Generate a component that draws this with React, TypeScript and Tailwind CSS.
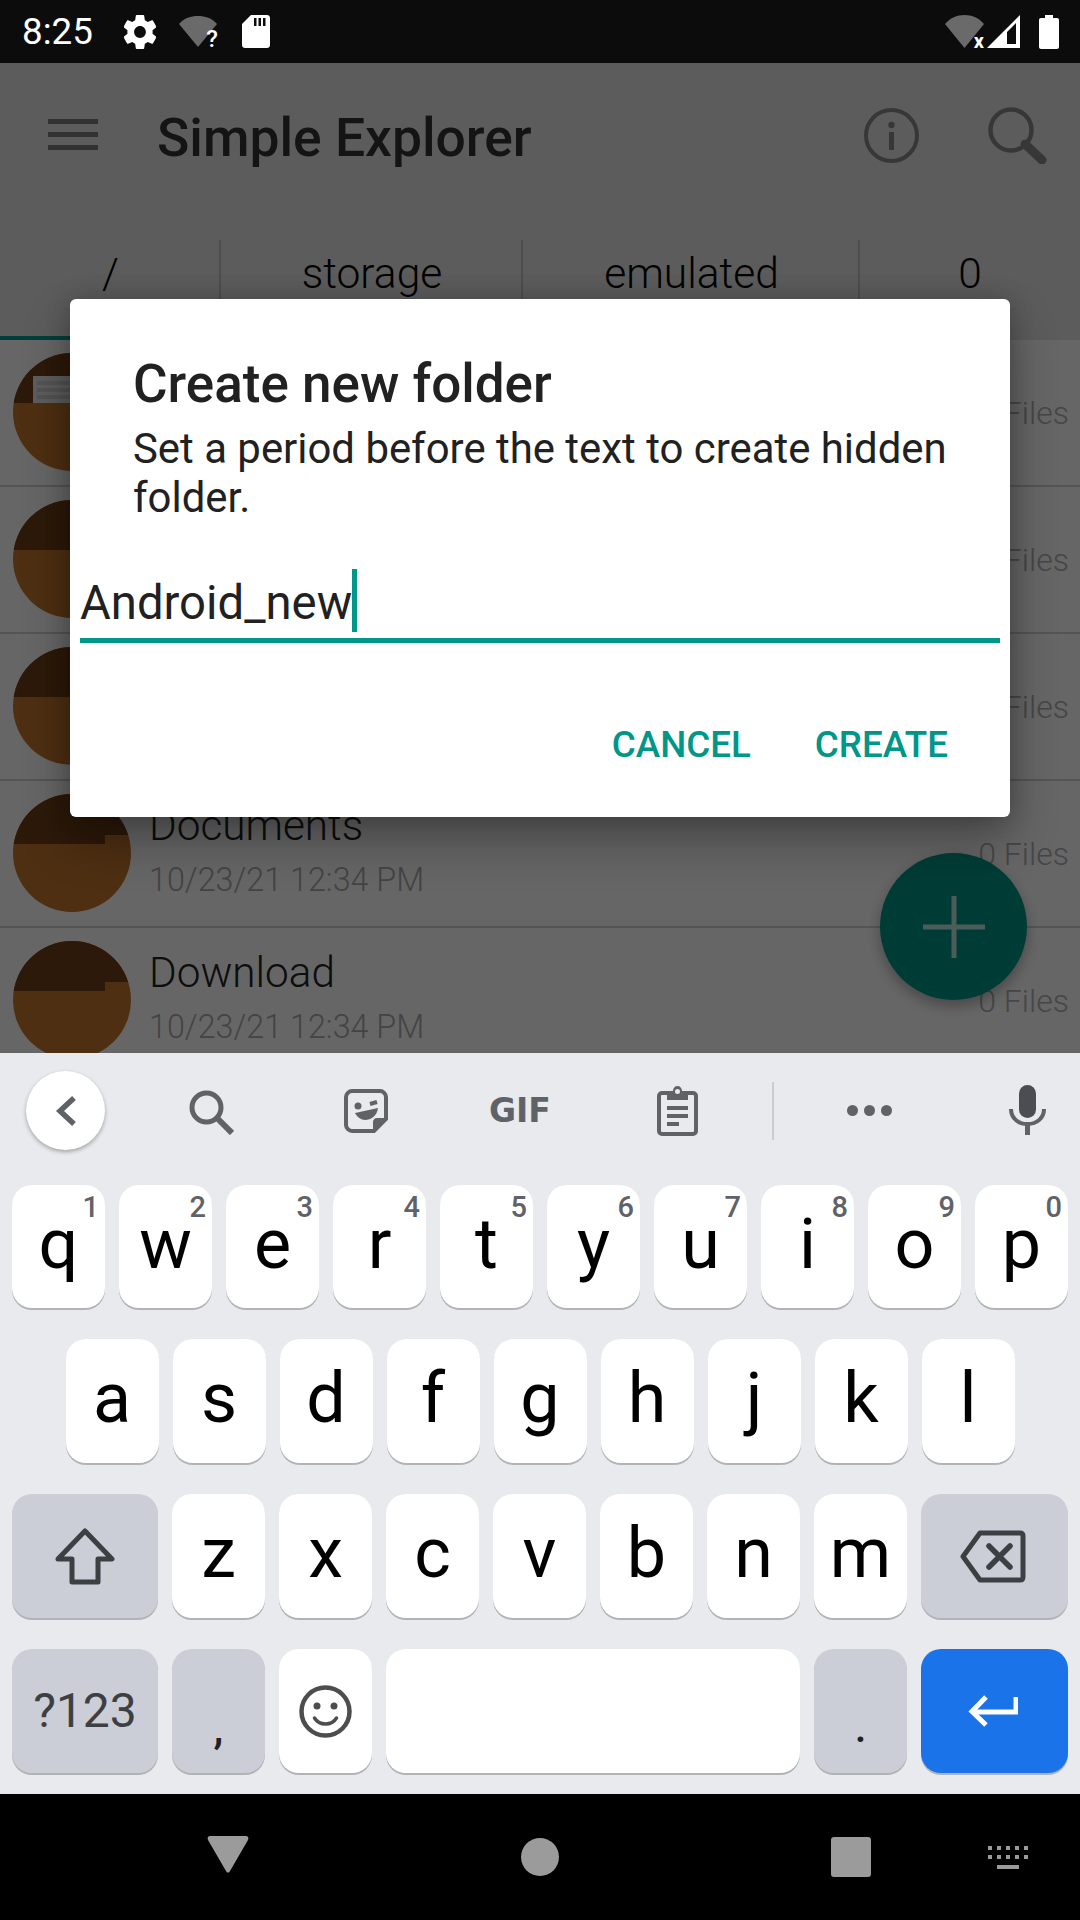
import React from "react";

const font = { fontFamily: "Roboto, sans-serif" };

function Key({ c, n, w = "w-[93px]" }: { c: string; n?: string; w?: string }) {
  return (
    <div className={`relative ${w} h-full rounded-[20px] bg-white shadow-[0_2px_0_#b1b3b7] text-black`}>
      <span className="absolute inset-x-0 top-[19px] h-[80px] text-center text-[70px] leading-[80px]">{c}</span>
      {n && <span className="absolute right-[6px] top-[6px] text-[29px] leading-[32px] font-medium text-[#5f6368]">{n}</span>}
    </div>
  );
}

function GrayKey({ w = "w-[93px]", children, className = "" }: { w?: string; children?: React.ReactNode; className?: string }) {
  return (
    <div className={`relative ${w} h-full rounded-[20px] bg-[#cbced6] shadow-[0_2px_0_#b1b3b7] flex items-center justify-center ${className}`}>
      {children}
    </div>
  );
}

function FolderCircle({ paper = false }: { paper?: boolean }) {
  return (
    <svg width="118" height="118" viewBox="0 0 118 118" className="shrink-0">
      <defs>
        <clipPath id={paper ? "cp1" : "cp2"}>
          <circle cx="59" cy="59" r="59" />
        </clipPath>
      </defs>
      <g clipPath={`url(#${paper ? "cp1" : "cp2"})`}>
        <rect width="118" height="118" fill="#c4762f" />
        <path d="M0 0H118V41H92V50H0Z" fill="#6e3f18" />
        {paper && (
          <>
            <rect x="20" y="23" width="80" height="27" fill="#e8e8e8" />
            <rect x="24" y="28" width="70" height="4" fill="#cfcfcf" />
            <rect x="24" y="35" width="70" height="4" fill="#cfcfcf" />
            <rect x="24" y="42" width="70" height="4" fill="#cfcfcf" />
          </>
        )}
      </g>
    </svg>
  );
}

function Row({ name, date, paper }: { name?: string; date?: string; paper?: boolean }) {
  return (
    <div className="relative h-[147px] shrink-0 border-b-[2px] border-[#d3d3d3] flex pl-[13px] pt-[13px] bg-white">
      <FolderCircle paper={paper} />
      <div className="ml-[18px] flex flex-col">
        {name && <span className="text-[42.3px] leading-[46px] font-light text-[#222] mt-[9px]">{name}</span>}
        {date && <span className="text-[32.3px] leading-[38px] font-light text-[#aaa] mt-[12px]">{date}</span>}
      </div>
      <span className="absolute right-[11px] top-[54px] text-[32px] leading-[38px] font-light text-[#b0b0b0]">0 Files</span>
    </div>
  );
}

function Tab({ w, t, sep = true, line = false }: { w: string; t: string; sep?: boolean; line?: boolean }) {
  return (
    <div className={`relative ${w} h-full flex items-start justify-center pt-[11px]`}>
      <span className="text-[42.5px] leading-[46px] font-light text-black">{t}</span>
      {sep && <span className="absolute right-0 top-0 bottom-0 w-[2px] bg-[#c4c4c4]" />}
      {line && <span className="absolute inset-x-0 bottom-0 h-[4px] bg-[#009f8e]" />}
    </div>
  );
}

const row1: [string, string][] = [["q","1"],["w","2"],["e","3"],["r","4"],["t","5"],["y","6"],["u","7"],["i","8"],["o","9"],["p","0"]];

export default function App() {
  return (
    <div className="relative w-[1080px] h-[1920px] overflow-hidden flex flex-col bg-black" style={font}>
      {/* status bar */}
      <div className="h-[63px] shrink-0 bg-[#0c0c0c] flex items-center pl-[22px] pr-[21px] text-white">
        <span className="text-[36.75px] leading-[40px] w-[70px] whitespace-nowrap">8:25</span>
        <svg className="ml-[32px]" width="32" height="34" viewBox="2.5 2 19 20" fill="#fff" preserveAspectRatio="none"><path d="M19.43 12.98c.04-.32.07-.64.07-.98s-.03-.66-.07-.98l2.11-1.65c.19-.15.24-.42.12-.64l-2-3.46c-.12-.22-.39-.3-.61-.22l-2.49 1c-.52-.4-1.08-.73-1.69-.98l-.38-2.65C14.46 2.18 14.25 2 14 2h-4c-.25 0-.46.18-.49.42l-.38 2.65c-.61.25-1.17.59-1.69.98l-2.49-1c-.23-.09-.49 0-.61.22l-2 3.46c-.13.22-.07.49.12.64l2.11 1.65c-.04.32-.07.65-.07.98s.03.66.07.98l-2.11 1.65c-.19.15-.24.42-.12.64l2 3.46c.12.22.39.3.61.22l2.49-1c.52.4 1.08.73 1.69.98l.38 2.65c.03.24.24.42.49.42h4c.25 0 .46-.18.49-.42l.38-2.65c.61-.25 1.17-.59 1.69-.98l2.49 1c.23.09.49 0 .61-.22l2-3.46c.12-.22.07-.49-.12-.64l-2.11-1.65zM12 15.5c-1.93 0-3.5-1.57-3.5-3.5s1.57-3.5 3.5-3.5 3.5 1.57 3.5 3.5-1.57 3.5-3.5 3.5z"/></svg>
        <div className="relative ml-[23px] w-[38px] h-[31px]">
          <svg width="38" height="31" viewBox="0 0 38 31"><path d="M0 8C5 2 12 0 19 0s14 2 19 8L19 31Z" fill="#6a6a6a" /></svg>
          <span className="absolute right-[-1px] bottom-[-4px] text-[24px] leading-[24px] font-medium">?</span>
        </div>
        <svg className="ml-[25px]" width="28" height="33" viewBox="0 0 28 33"><path d="M9 0H25C26.7 0 28 1.3 28 3V30C28 31.7 26.7 33 25 33H3C1.3 33 0 31.700 0 30V9Z" fill="#fff" /><rect x="12" y="3" width="2.500" height="8" fill="#0c0c0c" /><rect x="16.500" y="3" width="2.500" height="8" fill="#0c0c0c" /><rect x="21" y="3" width="2.500" height="8" fill="#0c0c0c" /></svg>
        <div className="ml-auto relative w-[39px] h-[33px]">
          <svg width="39" height="33" viewBox="0 0 39 33"><path d="M0 9C5 3 12 0 19.500 0S34 3 39 9L19.500 33Z" fill="#6a6a6a" /></svg>
          <span className="absolute right-[0px] bottom-[-3px] text-[20px] leading-[20px] font-bold">x</span>
        </div>
        <svg className="ml-[3px]" width="33" height="33" viewBox="0 0 33 33"><path d="M33 0V33H0ZM29 8 20 17V29H29Z" fill="#fff" fillRule="evenodd" /></svg>
        <svg className="ml-[19px]" width="20" height="34" viewBox="0 0 20 34"><path d="M6 0H14V3H18C19.100 3 20 3.900 20 5V32C20 33.100 19.100 34 18 34H2C.9 34 0 33.100 0 32V5C0 3.900.9 3 2 3H6Z" fill="#fff" /></svg>
      </div>

      {/* app under the scrim */}
      <div className="relative flex-1 min-h-0 flex flex-col">
        <div className="relative h-[990px] shrink-0 overflow-hidden bg-white flex flex-col">
          <div className="h-[177px] shrink-0 bg-[#e6e6e6] flex items-start relative">
            <div className="ml-[48px] mt-[56px] w-[50px] flex flex-col gap-[8px]">
              <span className="h-[5px] bg-[#7d7d7d]" />
              <span className="h-[5px] bg-[#7d7d7d]" />
              <span className="h-[5px] bg-[#7d7d7d]" />
            </div>
            <span className="ml-[59px] mt-[45px] text-[53.4px] leading-[60px] font-medium text-[#333] whitespace-nowrap">Simple Explorer</span>
            <svg className="ml-auto mt-[45px]" width="55" height="55" viewBox="0 0 55 55" fill="none"><circle cx="27.500" cy="27.500" r="25.500" stroke="#8a8a8a" strokeWidth="4" /><rect x="25" y="24" width="5" height="18" fill="#8a8a8a" /><circle cx="27.500" cy="17" r="3.200" fill="#8a8a8a" /></svg>
            <svg className="ml-[69px] mr-[33px] mt-[44px]" width="59" height="57" viewBox="0 0 59 57" fill="none"><circle cx="23" cy="23" r="20.500" stroke="#8a8a8a" strokeWidth="4.500" /><path d="M37 37 54 53" stroke="#8a8a8a" strokeWidth="9" strokeLinecap="round" /></svg>
          </div>
          <div className="h-[100px] shrink-0 bg-[#e6e6e6] flex">
            <Tab w="w-[221px]" t="/" line />
            <Tab w="w-[302px]" t="storage" />
            <Tab w="w-[337px]" t="emulated" />
            <Tab w="w-[220px]" t="0" sep={false} />
          </div>
          <Row paper />
          <Row />
          <Row />
          <Row name="Documents" date="10/23/21 12:34 PM" />
          <Row name="Download" date="10/23/21 12:34 PM" />
          {/* fab */}
          <div className="absolute left-[880px] top-[790px] w-[147px] h-[147px] rounded-full bg-[#009688] shadow-[0_6px_14px_rgba(0,0,0,0.3)] flex items-center justify-center">
            <svg width="62" height="62" viewBox="0 0 62 62"><path d="M28.500 0H33.500V28.500H62V33.500H33.500V62H28.500V33.500H0V28.500H28.500Z" fill="#fff" fillOpacity="0.75" /></svg>
          </div>
          <div className="absolute inset-0 bg-black/60" />
        </div>

        {/* dialog */}
        <div className="absolute left-[70px] top-[236px] w-[940px] h-[518px] rounded-[6px] bg-white shadow-[0_24px_48px_rgba(0,0,0,0.3),0_0_24px_rgba(0,0,0,0.2)] flex flex-col">
          <span className="ml-[63px] mt-[55px] text-[53px] leading-[60px] font-medium text-[#212121] whitespace-nowrap">Create new folder</span>
          <p className="ml-[63px] mt-[10px] w-[840px] text-[41.9px] leading-[49px] text-[#212121]">Set a period before the text to create hidden folder.</p>
          <div className="relative mx-[10px] mt-[43px] w-[920px] h-[78px] border-b-[5px] border-[#009688] text-[47.25px] leading-[60px] text-[#212121]">
            <div className="flex items-start pt-[8px]">
              <span>Android_new</span>
              <span className="w-[5px] h-[63px] -mt-[4px] bg-[#009688]" />
            </div>
          </div>
          <div className="ml-auto mr-[62px] mt-[80px] flex gap-[64px] text-[36.75px] leading-[44px] font-medium text-[#009688]">
            <span>CANCEL</span>
            <span>CREATE</span>
          </div>
        </div>

        {/* keyboard */}
        <div className="h-[741px] shrink-0 bg-[#e8eaed] flex flex-col px-[12px]">
          <div className="relative h-[132px] shrink-0 flex items-start -mx-[12px]">
            <div className="ml-[26px] mt-[18px] w-[79px] h-[79px] rounded-full bg-white shadow-[0_2px_4px_rgba(0,0,0,0.3)] flex items-center justify-center">
              <svg width="22" height="32" viewBox="0 0 22 32" fill="none"><path d="M19 3 5 16 19 29" stroke="#5f6368" strokeWidth="5.500" /></svg>
            </div>
            <svg className="ml-[84px] mt-[37px]" width="45" height="45" viewBox="0 0 45 45" fill="none"><circle cx="17.500" cy="17.500" r="14.500" stroke="#5f6368" strokeWidth="5" /><path d="M27 27 43 43" stroke="#5f6368" strokeWidth="6" /></svg>
            <svg className="ml-[110px] mt-[36px]" width="44" height="44" viewBox="0 0 44 44" fill="none"><path d="M8 2H36C39 2 42 5 42 8V30L30 42H8C5 42 2 39 2 36V8C2 5 5 2 8 2Z" stroke="#5f6368" strokeWidth="4" /><path d="M42 29H33C30.500 29 29 31 29 33V42Z" fill="#5f6368" /><circle cx="14" cy="17" r="3.500" fill="#5f6368" /><path d="M26 15 33 13" stroke="#5f6368" strokeWidth="4" /><path d="M11 24 34 19C33 27 27 31 21 31 17 31 13 28 11 24Z" fill="#5f6368" /></svg>
            <span className="ml-[101px] mt-[38px] w-[61px] text-center text-[33px] leading-[40px] font-black text-[#5f6368]" style={{ fontFamily: "'DejaVu Sans', sans-serif" }}>GIF</span>
            <svg className="ml-[107px] mt-[33px]" width="41" height="50" viewBox="0 0 41 50" fill="none"><rect x="2" y="7" width="37" height="41" rx="3" stroke="#5f6368" strokeWidth="4" /><path d="M10 5H16C16 2 18 0 20.500 0S25 2 25 5H31V14H10Z" fill="#5f6368" /><circle cx="20.500" cy="5.500" r="2.500" fill="#e8eaed" /><rect x="10" y="20" width="21" height="4" fill="#5f6368" /><rect x="10" y="28" width="21" height="4" fill="#5f6368" /><rect x="10" y="36" width="12" height="4" fill="#5f6368" /></svg>
            <span className="ml-[74px] mt-[29px] w-[2px] h-[58px] bg-[#c9ccd2]" />
            <div className="ml-[73px] mt-[52px] flex gap-[6px]">
              <span className="w-[11px] h-[11px] rounded-full bg-[#5f6368]" />
              <span className="w-[11px] h-[11px] rounded-full bg-[#5f6368]" />
              <span className="w-[11px] h-[11px] rounded-full bg-[#5f6368]" />
            </div>
            <svg className="ml-[117px] mt-[32px]" width="37" height="50" viewBox="0 0 37 50" fill="none"><rect x="10" y="0" width="17" height="33" rx="8.500" fill="#4a4d52" /><path d="M2 24C2 33 9 39 18.500 39S35 33 35 24" stroke="#5f6368" strokeWidth="4" /><rect x="16" y="38" width="5" height="12" fill="#5f6368" /></svg>
          </div>

          <div className="flex flex-col gap-[31px] pb-[21px] flex-1 min-h-0">
            <div className="h-[123px] flex gap-[14px]">
              {row1.map(([c, n]) => <Key key={c} c={c} n={n} />)}
            </div>
            <div className="h-[124px] flex gap-[14px] pl-[53.500px]">
              {"asdfghjkl".split("").map((c) => <Key key={c} c={c} />)}
            </div>
            <div className="h-[124px] flex gap-[14px]">
              <GrayKey w="w-[146px]">
                <svg width="60" height="57" viewBox="0 0 60 57" fill="none"><path d="M30 3 57 31H43V54H17V31H3Z" stroke="#3c4043" strokeWidth="5" strokeLinejoin="round" /></svg>
              </GrayKey>
              {"zxcvbnm".split("").map((c) => <Key key={c} c={c} />)}
              <GrayKey w="w-[147px]" className="pr-[4px]">
                <svg width="66" height="53" viewBox="0 0 66 53" fill="none"><path d="M20 3H60C62 3 63 4 63 6V47C63 49 62 50 60 50H20L3 26.500Z" stroke="#3c4043" strokeWidth="5" strokeLinejoin="round" /><path d="M29 16 50 37M50 16 29 37" stroke="#3c4043" strokeWidth="5.500" strokeLinecap="round" /></svg>
              </GrayKey>
            </div>
            <div className="h-[124px] flex gap-[14px]">
              <GrayKey w="w-[146px]"><span className="text-[48px] leading-[56px] text-[#3c4043]">?123</span></GrayKey>
              <GrayKey><span className="absolute inset-x-0 top-[55px] text-center text-[44px] leading-[48px] font-medium text-[#202124]">,</span></GrayKey>
              <div className="w-[93px] h-full rounded-[20px] bg-white shadow-[0_2px_0_#b1b3b7] flex items-center justify-center">
                <svg width="53" height="53" viewBox="0 0 53 53" fill="none"><circle cx="26.500" cy="26.500" r="24" stroke="#4d4d4d" strokeWidth="4.500" /><circle cx="18" cy="21" r="3.500" fill="#4d4d4d" /><circle cx="35" cy="21" r="3.500" fill="#4d4d4d" /><path d="M15.500 33C18 37 22 39 26.500 39S35 37 37.500 33" stroke="#4d4d4d" strokeWidth="3.500" strokeLinecap="round" /></svg>
              </div>
              <div className="w-[414px] h-full rounded-[20px] bg-white shadow-[0_2px_0_#b1b3b7]" />
              <GrayKey><span className="absolute inset-x-0 top-[55px] text-center text-[42px] leading-[48px] font-medium text-[#202124]">.</span></GrayKey>
              <div className="w-[147px] h-full rounded-[20px] bg-[#1a73e8] shadow-[0_2px_0_#b1b3b7] flex items-center justify-center pr-[4px]">
                <svg width="50" height="32" viewBox="0 0 50 32" fill="none"><path d="M48 2V17H4" stroke="#fff" strokeWidth="5" /><path d="M18 2 4 16.500 18 30" stroke="#fff" strokeWidth="5" /></svg>
              </div>
            </div>
          </div>
        </div>

        {/* nav bar */}
        <div className="h-[126px] shrink-0 bg-black flex items-start">
          <svg className="ml-[207px] mt-[42px]" width="42" height="37" viewBox="0 0 42 37"><path d="M3 0H39C41 0 42 2 41 4L23 35C22 37 20 37 19 35L1 4C0 2 1 0 3 0Z" fill="#9b9b9b" /></svg>
          <span className="ml-[272px] mt-[44px] w-[38px] h-[38px] rounded-full bg-[#9b9b9b]" />
          <span className="ml-[272px] mt-[43px] w-[40px] h-[40px] rounded-[3px] bg-[#9b9b9b]" />
          <svg className="ml-[117px] mt-[52px]" width="40" height="23" viewBox="0 0 40 23" fill="#9b9b9b"><rect x="0" y="0" width="4" height="4" /><rect x="9" y="0" width="4" height="4" /><rect x="18" y="0" width="4" height="4" /><rect x="27" y="0" width="4" height="4" /><rect x="36" y="0" width="4" height="4" /><rect x="0" y="9" width="4" height="4" /><rect x="9" y="9" width="4" height="4" /><rect x="18" y="9" width="4" height="4" /><rect x="27" y="9" width="4" height="4" /><rect x="36" y="9" width="4" height="4" /><rect x="9" y="19" width="22" height="4" /></svg>
        </div>
      </div>
    </div>
  );
}
